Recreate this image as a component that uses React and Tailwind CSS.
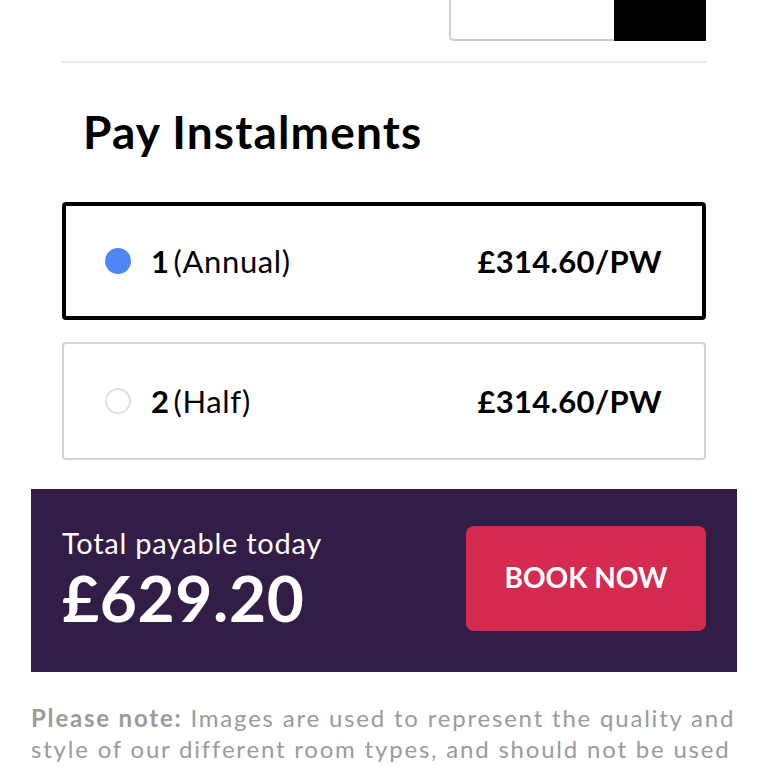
function Option({ num, label, price, selected }) {
  return (
    <div
      className={
        'flex h-[118px] items-center justify-between rounded-[4px] bg-white ' +
        (selected ? 'border-4 border-black pl-[39px] pr-[40px]' : 'border-2 border-[#d4d4d4] pl-[41px] pr-[42px]')
      }
    >
      <div className="flex items-center">
        {selected ? (
          <span className="block h-[26px] w-[26px] rounded-full bg-[#4f86f7]" />
        ) : (
          <span className="block h-[26px] w-[26px] rounded-full border-2 border-[#e0e0e0] bg-white" />
        )}
        <span className="ml-[20px] text-[31px] tracking-[0.02em] text-black">
          <span className="mr-[4px] font-bold">{num}</span>
          {label}
        </span>
      </div>
      <span className="text-[31px] font-bold tracking-[0.01em] text-black">{price}</span>
    </div>
  );
}

export default function App() {
  return (
    <div className="h-[768px] w-[768px] overflow-hidden bg-white font-['Lato','Liberation_Sans',sans-serif]">
      {/* bit of the control above, cut off by the top of the screen */}
      <div className="flex justify-end pr-[62px]">
        <div className="h-[41px] w-[165px] rounded-bl-[5px] border-b-2 border-l-2 border-[#cfcfcf] bg-white" />
        <div className="h-[41px] w-[92px] bg-black" />
      </div>

      <div className="mx-[62px] mt-[20px] h-[2px] bg-[#ebebeb]" />

      <h2 className="ml-[83px] mt-[43px] text-[46px] font-bold leading-[52px] tracking-[0.025em] text-black">
        Pay Instalments
      </h2>

      <div className="mx-[62px] mt-[44px] flex flex-col gap-[22px]">
        <Option num="1" label="(Annual)" price="£314.60/PW" selected />
        <Option num="2" label="(Half)" price="£314.60/PW" />
      </div>

      <div className="mx-[31px] mt-[29px] flex h-[183px] items-start justify-between bg-[#321d47] pl-[31px] pr-[31px]">
        <div className="mt-[38px] flex flex-col text-white">
          <span className="text-[29px] leading-[32px] tracking-[0.025em]">Total payable today</span>
          <span className="mt-[6px] text-[64px] font-bold leading-[66px] tracking-[0.01em]">£629.20</span>
        </div>
        <button className="mt-[37px] flex h-[105px] w-[240px] items-center justify-center rounded-[8px] bg-[#d62b50] pb-[3px] text-[28px] font-bold uppercase text-white">
          Book now
        </button>
      </div>

      <p className="mx-[31px] mt-[30px] whitespace-nowrap text-[24px] leading-[31px] tracking-[0.075em] text-[#9b9b9b]">
        <span className="font-bold">Please note:</span> Images are used to represent the quality and
        <br />
        style of our different room types, and should not be used
      </p>
    </div>
  );
}
